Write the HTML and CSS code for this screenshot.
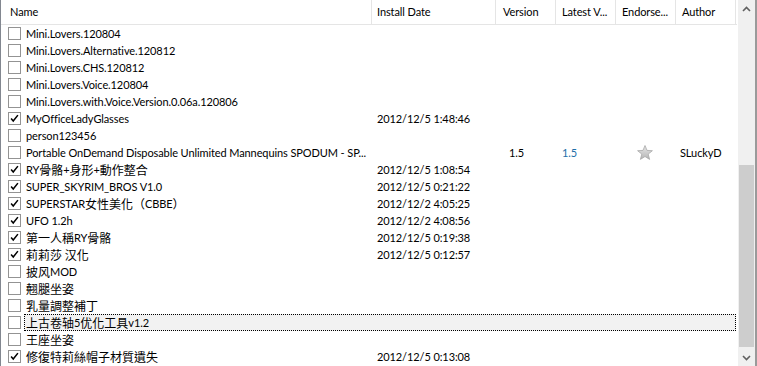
FILE: index.html
```html
<!DOCTYPE html>
<html>
<head>
<meta charset="utf-8">
<link rel="stylesheet" href="styles.css">
</head>
<body>
<div class="frame">
  <div class="list">
    <div class="head">
      <div class="hc c-name">Name</div>
      <div class="hc c-date">Install Date</div>
      <div class="hc c-ver">Version</div>
      <div class="hc c-lat">Latest V...</div>
      <div class="hc c-end">Endorse...</div>
      <div class="hc c-auth">Author</div>
    </div>
    <div class="rows">
      <div class="row"><div class="name"><span class="cb"></span><span class="t">Mini.Lovers.120804</span></div></div>
      <div class="row"><div class="name"><span class="cb"></span><span class="t">Mini.Lovers.Alternative.120812</span></div></div>
      <div class="row"><div class="name"><span class="cb"></span><span class="t">Mini.Lovers.CHS.120812</span></div></div>
      <div class="row"><div class="name"><span class="cb"></span><span class="t">Mini.Lovers.Voice.120804</span></div></div>
      <div class="row"><div class="name"><span class="cb"></span><span class="t">Mini.Lovers.with.Voice.Version.0.06a.120806</span></div></div>
      <div class="row"><div class="name"><span class="cb on"><svg viewBox="0 0 13 13"><path d="M2.5 6.5 L5 9.5 L10.5 2.5" fill="none" stroke="#000" stroke-width="1.8"/></svg></span><span class="t">MyOfficeLadyGlasses</span></div><div class="date">2012/12/5 1:48:46</div></div>
      <div class="row"><div class="name"><span class="cb"></span><span class="t">person123456</span></div></div>
      <div class="row"><div class="name"><span class="cb"></span><span class="t">Portable OnDemand Disposable Unlimited Mannequins SPODUM - SP...</span></div><div class="date"></div><div class="ver">1.5</div><div class="lat">1.5</div><div class="end"><svg class="star" viewBox="0 0 16 15"><defs><linearGradient id="sg" x1="0" y1="0" x2="0" y2="1"><stop offset="0" stop-color="#e8e8e8"/><stop offset="1" stop-color="#b4b4b4"/></linearGradient></defs><path d="M8 0.5 L10 5.4 L15.4 5.7 L11.2 9.1 L12.6 14.4 L8 11.5 L3.4 14.4 L4.8 9.1 L0.6 5.7 L6 5.4 Z" fill="url(#sg)" stroke="#a8a8a8" stroke-width="0.8"/></svg></div><div class="auth">SLuckyD</div></div>
      <div class="row"><div class="name"><span class="cb on"><svg viewBox="0 0 13 13"><path d="M2.5 6.5 L5 9.5 L10.5 2.5" fill="none" stroke="#000" stroke-width="1.8"/></svg></span><span class="t">RY<span class="cjk">骨骼</span>+<span class="cjk">身形</span>+<span class="cjk">動作整合</span></span></div><div class="date">2012/12/5 1:08:54</div></div>
      <div class="row"><div class="name"><span class="cb on"><svg viewBox="0 0 13 13"><path d="M2.5 6.5 L5 9.5 L10.5 2.5" fill="none" stroke="#000" stroke-width="1.8"/></svg></span><span class="t">SUPER_SKYRIM_BROS V1.0</span></div><div class="date">2012/12/5 0:21:22</div></div>
      <div class="row"><div class="name"><span class="cb on"><svg viewBox="0 0 13 13"><path d="M2.5 6.5 L5 9.5 L10.5 2.5" fill="none" stroke="#000" stroke-width="1.8"/></svg></span><span class="t">SUPERSTAR<span class="cjk">女性美化（</span>CBBE<span class="cjk">）</span></span></div><div class="date">2012/12/2 4:05:25</div></div>
      <div class="row"><div class="name"><span class="cb on"><svg viewBox="0 0 13 13"><path d="M2.5 6.5 L5 9.5 L10.5 2.5" fill="none" stroke="#000" stroke-width="1.8"/></svg></span><span class="t">UFO 1.2h</span></div><div class="date">2012/12/2 4:08:56</div></div>
      <div class="row"><div class="name"><span class="cb on"><svg viewBox="0 0 13 13"><path d="M2.5 6.5 L5 9.5 L10.5 2.5" fill="none" stroke="#000" stroke-width="1.8"/></svg></span><span class="t"><span class="cjk">第一人稱</span>RY<span class="cjk">骨骼</span></span></div><div class="date">2012/12/5 0:19:38</div></div>
      <div class="row"><div class="name"><span class="cb on"><svg viewBox="0 0 13 13"><path d="M2.5 6.5 L5 9.5 L10.5 2.5" fill="none" stroke="#000" stroke-width="1.8"/></svg></span><span class="t"><span class="cjk">莉莉莎 汉化</span></span></div><div class="date">2012/12/5 0:12:57</div></div>
      <div class="row"><div class="name"><span class="cb"></span><span class="t"><span class="cjk">披风</span>MOD</span></div></div>
      <div class="row"><div class="name"><span class="cb"></span><span class="t"><span class="cjk">翹腿坐姿</span></span></div></div>
      <div class="row"><div class="name"><span class="cb"></span><span class="t"><span class="cjk">乳量調整補丁</span></span></div></div>
      <div class="row focus"><div class="name"><span class="cb"></span><span class="t"><span class="cjk">上古卷轴</span>5<span class="cjk">优化工具</span>v1.2</span></div><div class="fbox"></div></div>
      <div class="row"><div class="name"><span class="cb"></span><span class="t"><span class="cjk">王座坐姿</span></span></div></div>
      <div class="row"><div class="name"><span class="cb on"><svg viewBox="0 0 13 13"><path d="M2.5 6.5 L5 9.5 L10.5 2.5" fill="none" stroke="#000" stroke-width="1.8"/></svg></span><span class="t"><span class="cjk">修復特莉絲帽子材質遺失</span></span></div><div class="date">2012/12/5 0:13:08</div></div>
    </div>
  </div>
  <div class="sbar">
    <div class="arrow"><svg viewBox="0 0 9 6" width="9" height="6"><path d="M1 5 L4.5 1.5 L8 5" fill="none" stroke="#606060" stroke-width="1.6"/></svg></div>
    <div class="track"><div class="thumb"></div></div>
    <div class="arrow"><svg viewBox="0 0 9 6" width="9" height="6"><path d="M1 1 L4.5 4.5 L8 1" fill="none" stroke="#606060" stroke-width="1.6"/></svg></div>
  </div>
  <div class="edge"></div>
</div>
</body>
</html>
```

FILE: styles.css
```css
* { box-sizing: border-box; }
html, body { margin: 0; padding: 0; background: #fff; }
body {
  width: 757px;
  height: 366px;
  overflow: hidden;
  font-family: Lato, "Noto Sans CJK TC", sans-serif;
  font-size: 11px;
  letter-spacing: -0.1px;
  color: #000;
}
.cjk {
  font-family: "Noto Sans CJK TC", sans-serif;
  font-size: 12px;
  letter-spacing: 0;
}
.frame {
  display: flex;
  height: 366px;
  border-left: 1px solid #828790;
}
.list {
  width: 736px;
  display: flex;
  flex-direction: column;
}
.head {
  display: grid;
  grid-template-columns: 371px 124px 60px 60px 60px 60px;
  height: 25px;
  border-bottom: 1px solid #e5e5e5;
}
.hc {
  border-right: 1px solid #e5e5e5;
  display: flex;
  align-items: center;
  padding-bottom: 1px;
  white-space: nowrap;
}
.c-name { padding-left: 9px; }
.c-date { padding-left: 5px; }
.c-ver { padding-left: 7px; }
.c-lat { padding-left: 6px; }
.c-end { padding-left: 6px; }
.c-auth { padding-left: 6px; }
.rows { display: flex; flex-direction: column; }
.row {
  position: relative;
  display: grid;
  grid-template-columns: 371px 124px 60px 60px 60px 60px;
  height: 17px;
  align-items: center;
  white-space: nowrap;
}
.name { display: flex; align-items: center; padding-left: 7px; overflow: hidden; height: 17px; }
.cb {
  width: 13px;
  height: 13px;
  border: 1px solid #939393;
  background: #fff;
  flex: none;
  display: flex;
}
.cb svg { width: 11px; height: 11px; margin: 0; }
.t { margin-left: 5px; display: flex; align-items: center; line-height: 17px; }
.date { padding-left: 5px; }
.ver { padding-left: 13px; }
.lat { padding-left: 6px; color: #1e6fa8; }
.end { display: flex; justify-content: center; padding-right: 3px; }
.star { width: 16px; height: 15px; display: block; }
.auth { padding-left: 4px; }
.fbox {
  position: absolute;
  left: 23px;
  top: 0;
  width: 712px;
  height: 17px;
  border: 1px dotted #000;
  background: #f2f2f2;
  z-index: 0;
}
.focus .name { position: relative; z-index: 1; }
.focus .cb { position: relative; z-index: 2; }
.sbar {
  margin-left: 1px;
  width: 17px;
  background: #f0f0f0;
  display: flex;
  flex-direction: column;
}
.arrow {
  height: 17px;
  display: flex;
  align-items: center;
  justify-content: center;
}
.track { flex: 1; padding: 148px 1px 2px 1px; }
.thumb { height: 182px; background: #cdcdcd; }
.edge {
  width: 2px;
  background: #9a9a9a;
}
```
